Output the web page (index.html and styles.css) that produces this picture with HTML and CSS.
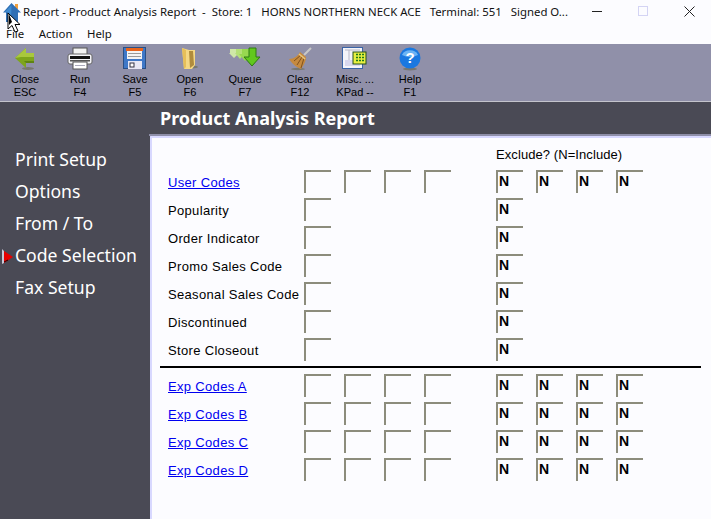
FILE: index.html
```html
<!DOCTYPE html>
<html lang="en">
<head>
<meta charset="utf-8">
<title>Product Analysis Report</title>
<link rel="stylesheet" href="styles.css">
</head>
<body>
<div class="window">
  <header class="titlebar">
    <svg class="app-icon" width="20" height="20" viewBox="0 0 20 20"><rect x="13" y="2" width="3" height="5" fill="#f0a040"/><path d="M9.500 1 L19 10.500 H16 V20 H4 V10.500 H1 Z" fill="#2f6fb5"/><path d="M9.500 3 L3 10 H6 V19 H9 Z" fill="#3f8ad0"/></svg>
    <span class="title-text">Report - Product Analysis Report  -  Store: 1   HORNS NORTHERN NECK ACE   Terminal: 551   Signed O...</span>
    <div class="controls">
      <svg class="ctl-min" width="11" height="11" viewBox="0 0 11 11"><path d="M0 5.500H10" stroke="#222" stroke-width="1"/></svg>
      <svg class="ctl-max" width="11" height="11" viewBox="0 0 11 11"><rect x=".5" y=".5" width="9" height="9" fill="none" stroke="#d4d4f4"/></svg>
      <svg class="ctl-close" width="11" height="11" viewBox="0 0 11 11"><path d="M.5 .5L10.500 10.500M10.500 .5L.5 10.500" stroke="#222" stroke-width="1"/></svg>
    </div>
  </header>
  <nav class="menubar"><span>File</span><span>Action</span><span>Help</span></nav>
  <div class="toolbar">
    <div class="tool">
      <svg width="24" height="24" viewBox="0 0 24 24"><ellipse cx="15" cy="21.500" rx="6" ry="1.500" fill="#77776f"/><path d="M2 11 L13 1 V6 H21 V16 H13 V21 Z" fill="#7ea51c"/><path d="M2 11 L13 1 V6 H21 V10 H8Z" fill="#a9c83d"/><path d="M13 16 H21 V14 H11Z" fill="#5f8412"/></svg>
      <span>Close</span><span>ESC</span>
    </div>
    <div class="tool">
      <svg width="26" height="24" viewBox="0 0 26 24"><rect x="6" y="1" width="14" height="7" fill="#f2f2f2" stroke="#555"/><rect x="1" y="7" width="24" height="10" rx="2" fill="#f4f4f8" stroke="#666"/><rect x="3" y="9" width="20" height="3" fill="#111"/><rect x="3" y="13" width="20" height="1.500" fill="#555"/><rect x="6" y="15" width="14" height="7" fill="#fff" stroke="#555"/><rect x="8" y="18" width="10" height="1" fill="#aab"/></svg>
      <span>Run</span><span>F4</span>
    </div>
    <div class="tool">
      <svg width="24" height="24" viewBox="0 0 24 24"><rect x=".5" y=".5" width="22" height="21" fill="#3f78c8" stroke="#2a4f86"/><rect x="3" y="1" width="17" height="3" fill="#e8641c"/><rect x="4" y="4" width="15" height="8" fill="#f4f4f4"/><path d="M5 6.500H18M5 9.500H18" stroke="#9a9a9a"/><rect x="5" y="14" width="14" height="8" fill="#e8e8f6"/><rect x="7" y="16" width="4" height="4" fill="#fff" stroke="#334"/></svg>
      <span>Save</span><span>F5</span>
    </div>
    <div class="tool">
      <svg width="20" height="24" viewBox="0 0 20 24"><ellipse cx="12" cy="20" rx="6" ry="1.500" fill="#77776f"/><path d="M2 1 L9 3 H15 V18 L12 22 H4 Z" fill="#f4d884"/><path d="M2 1 L6 3 V20 L4 22 Z" fill="#e6bf58"/><path d="M9 4 H13 L14 18 L10 21 Z" fill="#b08c3c"/></svg>
      <span>Open</span><span>F6</span>
    </div>
    <div class="tool">
      <svg width="32" height="24" viewBox="0 0 32 24"><path d="M1 2H7V6H10L5 11L0 6H1Z" fill="#cfe8a8"/><path d="M7 2H13V6H16L11 12L6 6H7Z" fill="#b4e078"/><path d="M13 2H20V7H23L16 14L10 7H13Z" fill="#98d850"/><path d="M20 1H27V10H31L23 19L15 10H20Z" fill="#62c81e" stroke="#2f7a12"/></svg>
      <span>Queue</span><span>F7</span>
    </div>
    <div class="tool">
      <svg width="24" height="24" viewBox="0 0 24 24"><ellipse cx="10" cy="22" rx="7" ry="1.200" fill="#77776f"/><path d="M16 8L23 1" stroke="#c8c8c8" stroke-width="2"/><path d="M12 5 L18 10 C18 15 15 19 13 22 C10 21 5 18 1 12 C6 12 10 9 12 5Z" fill="#c68a3e"/><path d="M13 8L6 14M14 10L9 18M16 11L13 21" stroke="#80521e"/><path d="M11 7L17 12" stroke="#e8c880" stroke-width="1.500"/></svg>
      <span>Clear</span><span>F12</span>
    </div>
    <div class="tool">
      <svg width="26" height="24" viewBox="0 0 26 24"><rect x=".5" y=".5" width="20" height="21" fill="#f4f4fa" stroke="#3a64a8"/><path d="M3 3H18M7 3V19" stroke="#b8b8c8"/><rect x="3" y="13" width="15" height="6" fill="#d8d8ee"/><rect x="11" y="5" width="13" height="12" fill="#e8f040" stroke="#24501a"/><path d="M14 7.500h8M14 10.500h8M14 13.500h8" stroke="#1c7a1c" stroke-width="1.500" stroke-dasharray="2 1"/></svg>
      <span>Misc. ...</span><span>KPad --</span>
    </div>
    <div class="tool">
      <svg width="22" height="24" viewBox="0 0 22 24"><ellipse cx="11" cy="22" rx="7" ry="1.500" fill="#77776f"/><circle cx="11" cy="11" r="10.500" fill="#1a78e0"/><path d="M3 8A8.500 7 0 0 1 19 8Q11 12 3 8Z" fill="#6cb4f4"/><text class="help-q" x="11" y="16" text-anchor="middle">?</text></svg>
      <span>Help</span><span>F1</span>
    </div>
  </div>
  <div class="main">
    <aside class="sidebar">
      <a class="side-item">Print Setup</a>
      <a class="side-item">Options</a>
      <a class="side-item">From / To</a>
      <a class="side-item current">
        <svg class="pointer" width="12" height="17" viewBox="0 0 12 17"><path d="M1 1L3 3V15L1 16Z" fill="#c8c8d8"/><path d="M3 3L12 9L3 15Z" fill="#e80000"/><path d="M3 14L7 12" stroke="#220000"/></svg>
        Code Selection
      </a>
      <a class="side-item">Fax Setup</a>
    </aside>
    <div class="content">
      <h1 class="heading">Product Analysis Report</h1>
      <main class="panel">
        <div class="exclude-head">Exclude? (N=Include)</div>
        <section class="grid">
          <a class="label link" href="#">User Codes</a>
          <i class="f"></i><i class="f"></i><i class="f"></i><i class="f"></i><i class="sp"></i><b class="f">N</b><b class="f">N</b><b class="f">N</b><b class="f">N</b>

          <span class="label">Popularity</span>
          <i class="f"></i><i class="sk3"></i><i class="sp"></i><b class="f">N</b><i class="sk3"></i>

          <span class="label">Order Indicator</span>
          <i class="f"></i><i class="sk3"></i><i class="sp"></i><b class="f">N</b><i class="sk3"></i>

          <span class="label">Promo Sales Code</span>
          <i class="f"></i><i class="sk3"></i><i class="sp"></i><b class="f">N</b><i class="sk3"></i>

          <span class="label">Seasonal Sales Code</span>
          <i class="f"></i><i class="sk3"></i><i class="sp"></i><b class="f">N</b><i class="sk3"></i>

          <span class="label">Discontinued</span>
          <i class="f"></i><i class="sk3"></i><i class="sp"></i><b class="f">N</b><i class="sk3"></i>

          <span class="label">Store Closeout</span>
          <i class="f"></i><i class="sk3"></i><i class="sp"></i><b class="f">N</b><i class="sk3"></i>
        </section>
        <hr class="rule">
        <section class="grid">
          <a class="label link" href="#">Exp Codes A</a>
          <i class="f"></i><i class="f"></i><i class="f"></i><i class="f"></i><i class="sp"></i><b class="f">N</b><b class="f">N</b><b class="f">N</b><b class="f">N</b>
          <a class="label link" href="#">Exp Codes B</a>
          <i class="f"></i><i class="f"></i><i class="f"></i><i class="f"></i><i class="sp"></i><b class="f">N</b><b class="f">N</b><b class="f">N</b><b class="f">N</b>
          <a class="label link" href="#">Exp Codes C</a>
          <i class="f"></i><i class="f"></i><i class="f"></i><i class="f"></i><i class="sp"></i><b class="f">N</b><b class="f">N</b><b class="f">N</b><b class="f">N</b>
          <a class="label link" href="#">Exp Codes D</a>
          <i class="f"></i><i class="f"></i><i class="f"></i><i class="f"></i><i class="sp"></i><b class="f">N</b><b class="f">N</b><b class="f">N</b><b class="f">N</b>
        </section>
      </main>
    </div>
  </div>
  <svg class="cursor" width="14" height="22" viewBox="0 0 14 22"><path d="M1 1V17L5 13.500L8 20L11 19L8 12.500H13Z" fill="#fff" stroke="#000" stroke-width="1"/><path d="M2 2V13L5 10L2 2Z" fill="#000"/></svg>
</div>
</body>
</html>
```
FILE: styles.css
```css
* { box-sizing: border-box; }
html, body { margin: 0; padding: 0; background: #fcfcff; }
.window {
  position: relative;
  width: 711px;
  height: 519px;
  overflow: hidden;
  display: flex;
  flex-direction: column;
  font-family: "Noto Sans", "Liberation Sans", sans-serif;
  color: #000;
  background: #fcfcff;
}
.titlebar {
  height: 22px;
  display: flex;
  align-items: center;
  font-size: 11.4px;
  flex: none;
  padding-left: 2px;
}
.app-icon { flex: none; margin-top: 1px; }
.title-text { white-space: pre; margin-left: 1px; color: #111; }
.controls { margin-left: auto; display: flex; align-items: center; }
.ctl-min { margin-right: 35px; }
.ctl-max { margin-right: 35px; }
.ctl-close { margin-right: 16px; }
.menubar {
  height: 22px;
  flex: none;
  display: flex;
  align-items: center;
  gap: 14.500px;
  padding-left: 6px;
  font-size: 11.4px;
  color: #111;
}
.toolbar {
  height: 58px;
  flex: none;
  background: #9090a9;
  border-bottom: 1px solid #c4c4cc;
  display: flex;
  gap: 5px;
  padding-top: 3px;
}
.tool {
  width: 50px;
  display: flex;
  flex-direction: column;
  align-items: center;
  font-family: "Liberation Sans", sans-serif;
  font-size: 11px;
  line-height: 13px;
  color: #000;
}
.tool svg { height: 24px; margin-bottom: 2px; flex: none; }
.tool span { white-space: nowrap; }
.help-q { font: bold 15px "Liberation Sans", sans-serif; fill: #fff; }
.main { flex: 1; display: flex; background: #4a4a55; min-height: 0; }
.sidebar {
  width: 150px;
  flex: none;
  padding-top: 41px;
  display: flex;
  flex-direction: column;
}
.side-item {
  position: relative;
  height: 32px;
  line-height: 32px;
  padding-left: 15px;
  font-size: 17.6px;
  color: #fff;
  white-space: nowrap;
}
.pointer { position: absolute; left: 1px; top: 9px; }
.content { flex: 1; display: flex; flex-direction: column; min-width: 0; }
.heading {
  margin: 0;
  height: 32px;
  padding-left: 10px;
  font-size: 18px;
  line-height: 33px;
  font-weight: 700;
  color: #fff;
  white-space: nowrap;
}
.panel {
  flex: 1;
  background: #fcfcff;
  border-left: 2px solid #d8d8ff;
  border-top: 4px solid #d8d8ff;
  border-top-left-radius: 3px;
  padding-left: 16px;
  position: relative;
  font-family: "Liberation Sans", sans-serif;
  font-size: 13px;
}
.panel::before {
  content: "";
  position: absolute;
  left: -3px;
  right: 0;
  top: -4px;
  height: 2px;
  background: #8e8ea8;
}
.exclude-head { height: 32px; padding-left: 328px; line-height: 33px; color: #000; letter-spacing: 0.08px; }
.grid {
  display: grid;
  grid-template-columns: 136px repeat(4, 40px) 32px repeat(4, 40px);
  grid-auto-rows: 28px;
}
.sp { display: block; }
.sk3 { display: block; grid-column: span 3; }
.label { line-height: 25px; white-space: nowrap; color: #000; letter-spacing: 0.33px; }
.link { color: #0000f0; text-decoration: underline; }
.f {
  display: block;
  width: 27px;
  height: 23px;
  border-top: 2px solid #8c8c7c;
  border-left: 2px solid #8c8c7c;
  font-family: "Liberation Sans", sans-serif;
  font-style: normal;
  font-weight: 700;
  font-size: 14px;
  line-height: 18px;
  padding-left: 1px;
  color: #000;
}
.rule {
  margin: 0 0 6px -8px;
  width: 541px;
  height: 2px;
  border: 0;
  background: #000;
}
.cursor { position: absolute; left: 7px; top: 12px; }
```
